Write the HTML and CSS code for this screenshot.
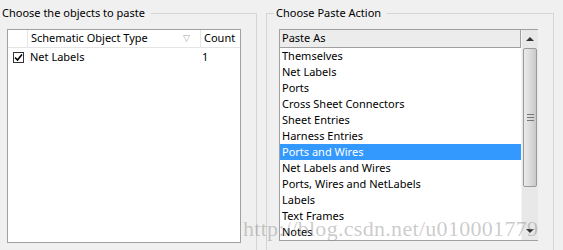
FILE: index.html
```html
<!DOCTYPE html>
<html>
    <head>
        <title>Smart Paste</title>
        <meta charset=utf8>
        <link rel="stylesheet" href="styles.css">
    </head>
    <body>
        <div class="dialog">
            <fieldset class="group group-objects">
                <legend>Choose the objects to paste</legend>
                <div class="listview">
                    <div class="lv-header">
                        <div class="lv-col col-check"></div>
                        <div class="lv-col col-type">Schematic Object Type <span class="sort">&#9661;</span></div>
                        <div class="lv-col col-count">Count</div>
                    </div>
                    <div class="lv-row">
                        <div class="col-check">
                            <span class="checkbox">
                                <svg width="9" height="9" viewBox="0 0 9 9"><path d="M1 4.5 L3.5 7 L8 1.5" fill="none" stroke="#000" stroke-width="1.6"/></svg>
                            </span>
                        </div>
                        <div class="col-type">Net Labels</div>
                        <div class="col-count">1</div>
                    </div>
                </div>
            </fieldset>
            <fieldset class="group group-action">
                <legend>Choose Paste Action</legend>
                <div class="listbox">
                    <div class="lb-main">
                        <div class="lb-header">Paste As</div>
                        <ul class="lb-items">
                            <li>Themselves</li>
                            <li>Net Labels</li>
                            <li>Ports</li>
                            <li>Cross Sheet Connectors</li>
                            <li>Sheet Entries</li>
                            <li>Harness Entries</li>
                            <li class="selected">Ports and Wires</li>
                            <li>Net Labels and Wires</li>
                            <li>Ports, Wires and NetLabels</li>
                            <li>Labels</li>
                            <li>Text Frames</li>
                            <li>Notes</li>
                        </ul>
                    </div>
                    <div class="scrollbar">
                        <div class="sb-btn"><span class="arrow-up"></span></div>
                        <div class="sb-track">
                            <div class="sb-thumb"><span class="grip"></span></div>
                        </div>
                        <div class="sb-btn"><span class="arrow-down"></span></div>
                    </div>
                </div>
            </fieldset>
            <div class="watermark">http://blog.csdn.net/u010001779</div>
        </div>
    </body>
</html>
```

FILE: styles.css
```css
html {
    font-family: "Noto Sans", sans-serif;
    font-size: 11px;
}
body {
    margin: 0;
    padding: 0;
    background-color: #f0f0f0;
    color: #000;
}
.dialog {
    position: relative;
    display: flex;
    gap: 9px;
    height: 250px;
    overflow: hidden;
}
.group {
    margin: 5px 0 0 0;
    padding: 8px 15px 0 7px;
    border: 1px solid #d5d5d5;
    height: 260px;
    box-sizing: border-box;
    flex-shrink: 0;
}
.group legend {
    padding: 0 6px 0 2px;
    margin-left: -5px;
    line-height: 16px;
}
.group-objects {
    border-left: none;
    width: 257px;
}
.group-objects legend {
    margin-left: -7px;
}
.group-action {
    width: 288px;
    padding-left: 12px;
    padding-right: 14px;
}

/* left list view */
.listview {
    width: 234px;
    height: 214px;
    box-sizing: border-box;
    border: 1px solid #a0a0a0;
    background: #fff;
}
.lv-header {
    display: flex;
    height: 17px;
    line-height: 16px;
    border-bottom: 1px solid #e5e5e5;
}
.lv-col {
    border-right: 1px solid #e5e5e5;
}
.lv-row {
    display: flex;
    height: 16px;
    line-height: 16px;
    margin-top: 1px;
}
.col-check {
    width: 19px;
    display: flex;
    align-items: center;
    justify-content: center;
}
.col-type {
    width: 169px;
    padding-left: 3px;
    display: flex;
    justify-content: space-between;
}
.col-count {
    flex: 1;
    padding-left: 3px;
}
.lv-col.col-count {
    border-right: none;
}
.sort {
    color: #aaa;
    font-size: 9px;
    padding-right: 10px;
}
.checkbox {
    width: 11px;
    height: 11px;
    box-sizing: border-box;
    border: 1px solid #333;
    background: #fff;
    display: flex;
    align-items: center;
    justify-content: center;
    margin-left: 1px;
}

/* right list box */
.listbox {
    display: flex;
    width: 259px;
    height: 212px;
    box-sizing: border-box;
    border: 1px solid #a0a0a0;
    border-right: none;
    background: #fff;
}
.lb-main {
    flex: 1;
}
.lb-header {
    height: 18px;
    box-sizing: border-box;
    line-height: 16px;
    padding-left: 2px;
    background: #ececec;
    border-bottom: 1px solid #a0a0a0;
    border-right: 1px solid #a0a0a0;
}
.lb-items {
    list-style: none;
    margin: 0;
    padding: 0;
}
.lb-items li {
    height: 16px;
    line-height: 16px;
    padding-left: 2px;
}
.lb-items li.selected {
    background: #3399ff;
    color: #fff;
}
.scrollbar {
    width: 16px;
    display: flex;
    flex-direction: column;
    background: #e8e8e8;
    border-left: 1px solid #f4f4f4;
}
.sb-btn {
    height: 18px;
    display: flex;
    align-items: center;
    justify-content: center;
}
.sb-track {
    flex: 1;
}
.sb-thumb {
    height: 139px;
    margin: 0 1px;
    box-sizing: border-box;
    border: 1px solid #9a9a9a;
    border-radius: 2px;
    background: linear-gradient(to right, #e9e9e9, #dcdcdc 50%, #c8c8c8);
    display: flex;
    align-items: center;
    justify-content: center;
}
.grip {
    width: 7px;
    height: 5px;
    border-top: 1px solid #777;
    border-bottom: 1px solid #777;
    background: linear-gradient(#777, #777) center / 7px 1px no-repeat;
}
.arrow-up, .arrow-down {
    width: 0;
    height: 0;
    border-left: 4px solid transparent;
    border-right: 4px solid transparent;
}
.arrow-up {
    border-bottom: 4px solid #333;
}
.arrow-down {
    border-top: 4px solid #333;
}

.watermark {
    position: absolute;
    left: 243px;
    top: 216px;
    font-family: "Liberation Serif", serif;
    font-size: 22px;
    color: rgba(140, 140, 140, 0.45);
    letter-spacing: 0.3px;
}
```
